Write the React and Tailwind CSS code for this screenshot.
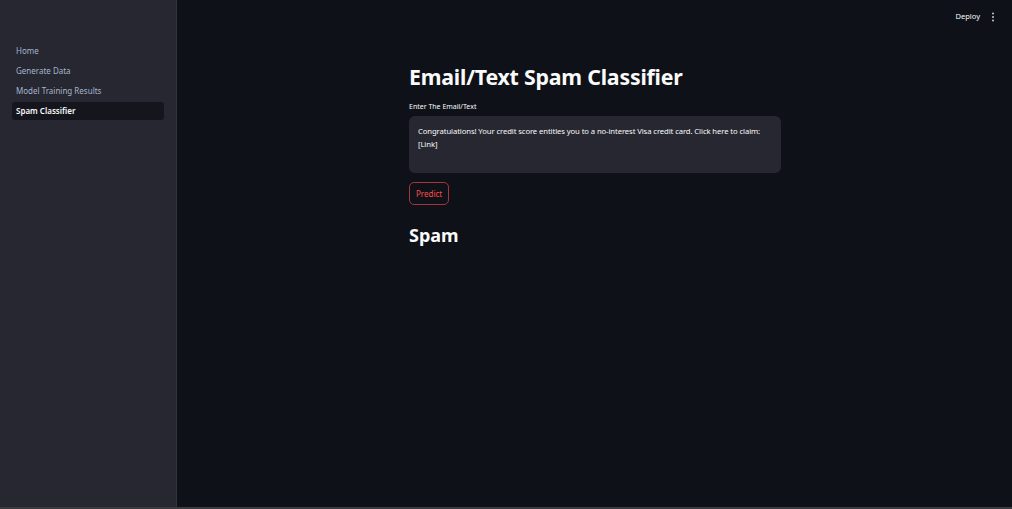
import React from "react";

const pages = ["Home", "Generate Data", "Model Training Results", "Spam Classifier"];

const App = () => {
  const active = "Spam Classifier";
  return (
    <div
      className="flex h-[509px] w-[1012px] overflow-hidden bg-[#0e1117] border-b-2 border-[#3b3b40]"
      style={{ fontFamily: '"Noto Sans", "Liberation Sans", sans-serif' }}
    >
      {/* Sidebar */}
      <aside className="w-[177px] shrink-0 bg-[#262730] border-r border-[#31333b] pt-[42px] px-3">
        <nav className="flex flex-col gap-[2px]">
          {pages.map((p) => (
            <div
              key={p}
              className={
                p === active
                  ? "h-[18px] rounded-[3px] bg-[#15161d] px-[4px] flex items-center text-[8px] font-semibold text-[#fafafa]"
                  : "h-[18px] px-[4px] flex items-center text-[8px] text-[#a7b4cc]"
              }
            >
              {p}
            </div>
          ))}
        </nav>
      </aside>

      {/* Main */}
      <main className="flex-1 flex flex-col">
        <header className="h-[34px] flex items-center justify-end gap-[11px] pr-[17px]">
          <span className="text-[7.5px] text-[#fafafa]">Deploy</span>
          <svg width="4" height="10" viewBox="0 0 4 10">
            <circle cx="2" cy="1.5" r="1" fill="#c7c9cf" />
            <circle cx="2" cy="5" r="1" fill="#c7c9cf" />
            <circle cx="2" cy="8.5" r="1" fill="#c7c9cf" />
          </svg>
        </header>

        <div className="w-[372px] ml-[232px] pt-[27px]">
          <h1 className="text-[21.3px] leading-[32px] font-bold text-[#fafafa] tracking-[-0.2px]">
            Email/Text Spam Classifier
          </h1>
          <label className="block mt-[9px] text-[7px] leading-[10px] text-[#fafafa]">
            Enter The Email/Text
          </label>
          <div className="mt-[4px] h-[57px] rounded-[6px] bg-[#262730] px-[9px] pt-[9px] text-[7.7px] leading-[13px] text-[#fafafa] tracking-[-0.1px]">
            Congratulations! Your credit score entitles you to a no-interest Visa credit card. Click here to claim: [Link]
          </div>
          <button className="mt-[9px] h-[23px] px-[6px] rounded-[5px] border border-[#a6343a] text-[8px] text-[#ff4b4b] bg-transparent">
            Predict
          </button>
          <h2 className="mt-[17px] text-[18px] leading-[26px] font-bold text-[#fafafa]">Spam</h2>
        </div>
      </main>
    </div>
  );
};

export default App;
